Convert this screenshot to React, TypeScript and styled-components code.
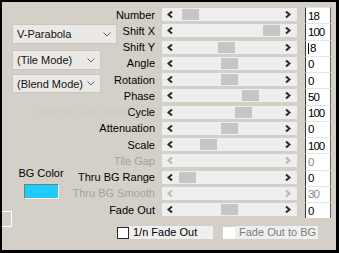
import React from "react";
import styled, { createGlobalStyle } from "styled-components";

const GlobalStyle = createGlobalStyle`
  html, body {
    margin: 0;
    padding: 0;
    background: #000;
  }
  body {
    font-family: "Liberation Sans", Arial, sans-serif;
    font-size: 11px;
  }
`;

const Window = styled.div`
  position: relative;
  width: 339px;
  height: 253px;
  box-sizing: border-box;
  border-style: solid;
  border-color: #000;
  border-width: 2px 3px 3px 2px;
  background: #d4d0c8;
  display: flex;
  overflow: hidden;
`;

const LeftColumn = styled.div`
  width: 68px;
  flex-shrink: 0;
  display: flex;
  flex-direction: column;
  align-items: flex-start;
  padding-top: 22px;
`;

const Combo = styled.div<{ $w: number; $h?: number; $gap?: number }>`
  box-sizing: border-box;
  width: ${(p) => p.$w}px;
  height: ${(p) => p.$h ?? 20}px;
  margin: ${(p) => p.$gap ?? 0}px 0 0 10px;
  flex-shrink: 0;
  display: flex;
  align-items: center;
  justify-content: space-between;
  padding: 0 5px 0 4px;
  background: #ebe9e6;
  border: 1px solid #c9c6c0;
  font-size: 11px;
  color: #111;
  white-space: nowrap;
`;

const ColorBlock = styled.div`
  margin: 74px 0 0 16px;
  width: 46px;
  display: flex;
  flex-direction: column;
  align-items: center;
  gap: 4px;
`;

const ColorLabel = styled.div`
  line-height: 13px;
  color: #000;
  white-space: nowrap;
`;

const Swatch = styled.div<{ $color: string }>`
  box-sizing: border-box;
  width: 35px;
  height: 15px;
  background: ${(p) => p.$color};
  border-style: solid;
  border-width: 1px;
  border-color: #7a7a7a #fff #fff #7a7a7a;
`;

const GroupCorner = styled.div`
  box-sizing: border-box;
  margin-top: 12px;
  width: 10px;
  height: 16px;
  border: 1px solid #fff;
  border-left: none;
`;

const RightSection = styled.div`
  display: flex;
  flex-direction: column;
  padding-top: 5px;
`;

const ControlGrid = styled.div`
  display: grid;
  grid-template-columns: 85px 135px 27px;
  grid-auto-rows: 16.25px;
  column-gap: 7px;
`;

const Label = styled.div<{ $disabled?: boolean }>`
  align-self: center;
  text-align: right;
  line-height: 13px;
  white-space: nowrap;
  color: ${(p) => (p.$disabled ? "#a3a19d" : "#000")};
`;

const Track = styled.div`
  position: relative;
  margin-top: 1px;
  height: 13px;
  background: #eeeeee;
  display: flex;
  align-items: center;
  justify-content: space-between;
  padding: 0 6px 0 5px;
`;

const Thumb = styled.div`
  position: absolute;
  top: 1px;
  height: 11px;
  width: 17px;
  background: #c6c6c6;
`;

const ValueBox = styled.div<{ $disabled?: boolean }>`
  box-sizing: border-box;
  margin-left: 1px;
  background: #fff;
  border-left: 1px solid #3a3a3a;
  border-right: 1px solid #6a6a6a;
  border-top: 1px solid #e4e4e4;
  display: flex;
  align-items: center;
  padding-left: 2px;
  font-size: 11.5px;
  letter-spacing: -1px;
  color: ${(p) => (p.$disabled ? "#8a8a8a" : "#000")};
`;

const Caret = styled.span`
  display: inline-block;
  width: 1px;
  height: 11px;
  background: #000;
  margin-right: 1px;
`;

const CheckRow = styled.div`
  display: flex;
  align-items: center;
  margin: 8px 0 0 47px;
`;

const CheckBox = styled.div<{ $disabled?: boolean }>`
  box-sizing: border-box;
  width: 12px;
  height: 12px;
  background: #fff;
  border: ${(p) => (p.$disabled ? "none" : "1px solid #2c2c2c")};
`;

const CheckLabel = styled.div<{ $w: number; $disabled?: boolean }>`
  box-sizing: border-box;
  width: ${(p) => p.$w}px;
  height: 13px;
  line-height: 13px;
  padding-left: 4px;
  background: #efefef;
  white-space: nowrap;
  color: ${(p) => (p.$disabled ? "#7c7c7c" : "#000")};
  margin-right: 10px;
`;

const Watermark = styled.div`
  position: absolute;
  left: 32px;
  top: 102px;
  font-family: "Liberation Serif", serif;
  font-style: italic;
  font-size: 12px;
  letter-spacing: 0.3px;
  color: rgba(255, 255, 255, 0.4);
  text-shadow: 0 0 1px rgba(120, 120, 120, 0.35);
  pointer-events: none;
`;

const Chevron = ({ color = "#666" }: { color?: string }) => (
  <svg width="8" height="5" viewBox="0 0 8 5">
    <polyline points="0.5,0.5 4,4 7.5,0.5" fill="none" stroke={color} strokeWidth="1" />
  </svg>
);

const Arrow = ({ dir, disabled }: { dir: "left" | "right"; disabled?: boolean }) => (
  <svg width="6" height="7" viewBox="0 0 6 7">
    <polyline
      points={dir === "left" ? "5,0.5 1.5,3.5 5,6.5" : "1,0.5 4.5,3.5 1,6.5"}
      fill="none"
      stroke={disabled ? "#b8b8b8" : "#2a2a2a"}
      strokeWidth="2"
    />
  </svg>
);

type Control = { label: string; value: string; thumb: number | null; disabled?: boolean; caret?: boolean };

const controls: Control[] = [
  { label: "Number", value: "18", thumb: 20 },
  { label: "Shift X", value: "100", thumb: 101 },
  { label: "Shift Y", value: "8", thumb: 56, caret: true },
  { label: "Angle", value: "0", thumb: 59 },
  { label: "Rotation", value: "0", thumb: 59 },
  { label: "Phase", value: "50", thumb: 80 },
  { label: "Cycle", value: "100", thumb: 73 },
  { label: "Attenuation", value: "0", thumb: 59 },
  { label: "Scale", value: "100", thumb: 38 },
  { label: "Tile Gap", value: "0", thumb: null, disabled: true },
  { label: "Thru BG Range", value: "0", thumb: 17 },
  { label: "Thru BG Smooth", value: "30", thumb: null, disabled: true },
  { label: "Fade Out", value: "0", thumb: 59 },
];

function App() {
  return (
    <>
      <GlobalStyle />
      <Window>
        <LeftColumn>
          <Combo $w={105}>
            V-Parabola
            <Chevron />
          </Combo>
          <Combo $w={89} $gap={6}>
            (Tile Mode)
            <Chevron />
          </Combo>
          <Combo $w={89} $h={19} $gap={4}>
            (Blend Mode)
            <Chevron />
          </Combo>
          <ColorBlock>
            <ColorLabel>BG Color</ColorLabel>
            <Swatch $color="#1ecbfa" />
          </ColorBlock>
          <GroupCorner />
        </LeftColumn>

        <RightSection>
          <ControlGrid>
            {controls.map((c) => (
              <React.Fragment key={c.label}>
                <Label $disabled={c.disabled}>{c.label}</Label>
                <Track>
                  <Arrow dir="left" disabled={c.disabled} />
                  {c.thumb !== null && <Thumb style={{ left: c.thumb }} />}
                  <Arrow dir="right" disabled={c.disabled} />
                </Track>
                <ValueBox $disabled={c.disabled}>
                  {c.caret && <Caret />}
                  {c.value}
                </ValueBox>
              </React.Fragment>
            ))}
          </ControlGrid>
          <CheckRow>
            <CheckBox />
            <CheckLabel $w={84}>1/n Fade Out</CheckLabel>
            <CheckBox $disabled />
            <CheckLabel $w={83} $disabled>
              Fade Out to BG
            </CheckLabel>
          </CheckRow>
        </RightSection>

        <Watermark>Tutorial Lica Bady</Watermark>
      </Window>
    </>
  );
}

export default App;
